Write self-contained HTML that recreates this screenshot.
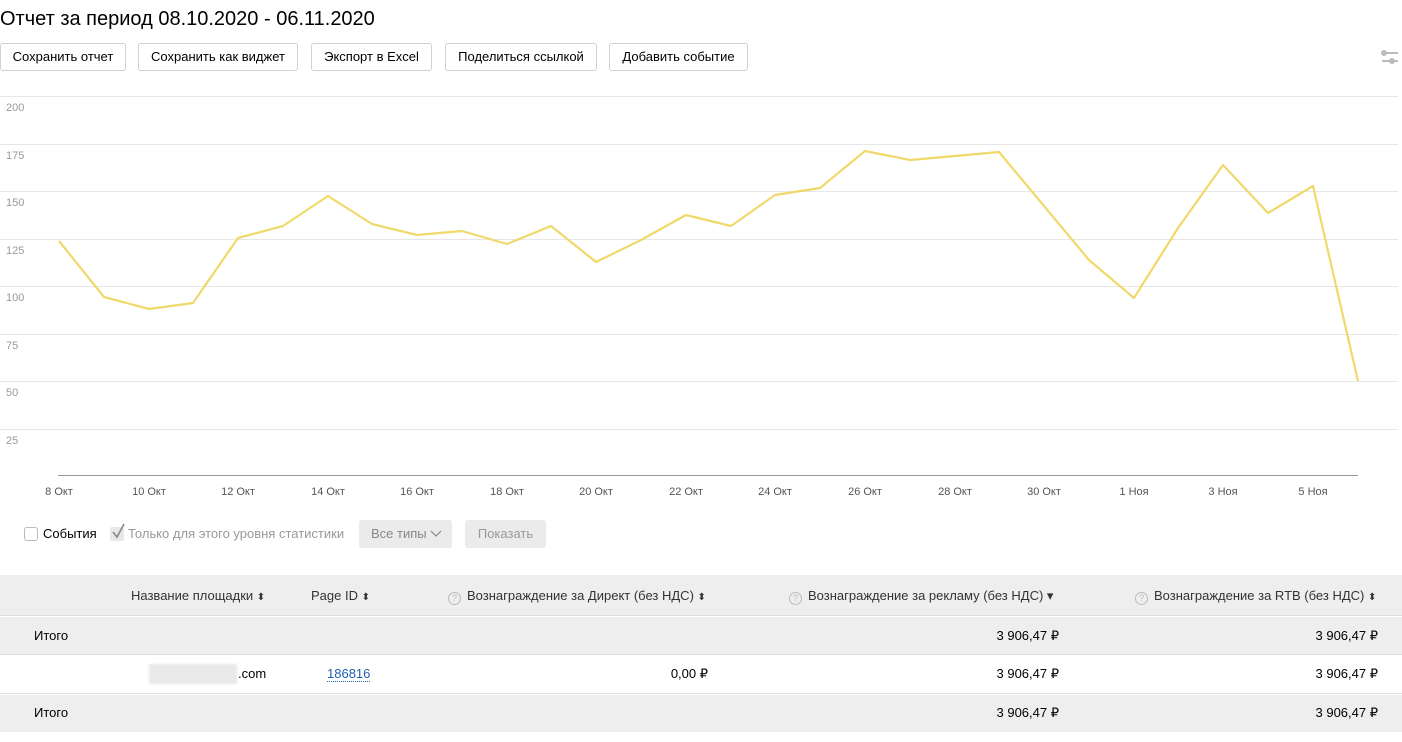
<!DOCTYPE html>
<html><head><meta charset="utf-8"><style>
*{margin:0;padding:0;box-sizing:border-box}
body{width:1402px;height:742px;background:#fff;font-family:"Liberation Sans",Arial,sans-serif;color:#000;position:relative;overflow:hidden}
.a{position:absolute;white-space:nowrap}
.btn{position:absolute;top:43px;height:28px;border:1px solid #d0d0d0;border-radius:3px;font-size:13px;line-height:26px;text-align:center;background:#fff}
.yl{position:absolute;left:6px;font-size:11px;color:#999}
.xl{position:absolute;top:486px;font-size:11px;color:#555;transform:translateX(-50%)}
.row{position:absolute;left:0;width:1402px}
.t{position:absolute;font-size:13px;line-height:16px}
.q{display:inline-block;width:13px;height:13px;border:1px solid #bbb;border-radius:50%;font-size:9px;line-height:11px;text-align:center;color:#bbb;margin-right:6px;vertical-align:-1px}
.s{font-size:10px}
</style></head><body>
<div class="a" style="left:0;top:8px;font-size:20px">Отчет за период 08.10.2020 - 06.11.2020</div>
<div class="btn" style="left:0;width:126px">Сохранить отчет</div>
<div class="btn" style="left:138px;width:160px">Сохранить как виджет</div>
<div class="btn" style="left:311px;width:121px">Экспорт в Excel</div>
<div class="btn" style="left:445px;width:152px">Поделиться ссылкой</div>
<div class="btn" style="left:609px;width:139px">Добавить событие</div>
<svg class="a" style="left:1380px;top:48px" width="20" height="18"><g fill="#bbb" stroke="#bbb" stroke-width="2"><line x1="2" y1="5" x2="18" y2="5"/><circle cx="4" cy="5" r="2"/><line x1="2" y1="13" x2="18" y2="13"/><circle cx="12" cy="13" r="2"/></g></svg>
<svg class="a" style="left:0;top:0" width="1402" height="500">
<g stroke="#e6e6e6" stroke-width="1">
<line x1="0" y1="96.5" x2="1398" y2="96.5"/><line x1="0" y1="144.5" x2="1398" y2="144.5"/><line x1="0" y1="191.5" x2="1398" y2="191.5"/><line x1="0" y1="239.5" x2="1398" y2="239.5"/><line x1="0" y1="286.5" x2="1398" y2="286.5"/><line x1="0" y1="334.5" x2="1398" y2="334.5"/><line x1="0" y1="381.5" x2="1398" y2="381.5"/><line x1="0" y1="429.5" x2="1398" y2="429.5"/>
</g>
<line x1="58" y1="475.5" x2="1358" y2="475.5" stroke="#999" stroke-width="1"/>
<polyline fill="none" stroke="#f0d96a" stroke-width="2.2" stroke-linejoin="round" points="59,241 104,297 149,309 193,303 238,238 283,226 328,196 372,224 417,235 462,231 507,244 551,226 596,262 641,240 686,215 731,226 775,195 820,188 865,151 910,160 955,156 999,152 1044,206 1089,260 1134,298 1178,228 1223,165 1268,213 1313,186 1358,381"/>
</svg>
<div class="yl" style="top:102px">200</div><div class="yl" style="top:150px">175</div><div class="yl" style="top:197px">150</div><div class="yl" style="top:245px">125</div><div class="yl" style="top:292px">100</div><div class="yl" style="top:340px">75</div><div class="yl" style="top:387px">50</div><div class="yl" style="top:435px">25</div>
<div class="xl" style="left:59px">8 Окт</div><div class="xl" style="left:149px">10 Окт</div><div class="xl" style="left:238px">12 Окт</div><div class="xl" style="left:328px">14 Окт</div><div class="xl" style="left:417px">16 Окт</div><div class="xl" style="left:507px">18 Окт</div><div class="xl" style="left:596px">20 Окт</div><div class="xl" style="left:686px">22 Окт</div><div class="xl" style="left:775px">24 Окт</div><div class="xl" style="left:865px">26 Окт</div><div class="xl" style="left:955px">28 Окт</div><div class="xl" style="left:1044px">30 Окт</div><div class="xl" style="left:1134px">1 Ноя</div><div class="xl" style="left:1223px">3 Ноя</div><div class="xl" style="left:1313px">5 Ноя</div>
<div class="a" style="left:24px;top:527px;width:14px;height:14px;border:1px solid #bbb;border-radius:3px"></div>
<div class="a" style="left:43px;top:526px;font-size:13px">События</div>
<div class="a" style="left:110px;top:527px;width:14px;height:14px;background:#e8e8e8;border-radius:2px"></div>
<svg class="a" style="left:110px;top:522px" width="16" height="18"><path d="M3 10 L7 15 L14 2" fill="none" stroke="#888" stroke-width="1.6"/></svg>
<div class="a" style="left:128px;top:526px;font-size:13px;color:#999">Только для этого уровня статистики</div>
<div class="a" style="left:359px;top:520px;width:93px;height:28px;background:#ebebeb;border-radius:3px;font-size:13px;color:#888;line-height:28px;padding-left:12px">Все типы</div>
<svg class="a" style="left:430px;top:530px" width="12" height="8"><path d="M1 1 L6 6 L11 1" fill="none" stroke="#888" stroke-width="1.2"/></svg>
<div class="a" style="left:465px;top:520px;width:81px;height:28px;background:#ebebeb;border-radius:3px;font-size:13px;color:#999;line-height:28px;text-align:center">Показать</div>
<div class="row" style="top:575px;height:41px;background:#eee;border-bottom:1px solid #ddd"></div>
<div class="row" style="top:617px;height:38px;background:#eee;border-bottom:1px solid #ddd"></div>
<div class="row" style="top:656px;height:38px;background:#fff;border-bottom:1px solid #ddd"></div>
<div class="row" style="top:695px;height:37px;background:#eee"></div>
<div class="t" style="left:131px;top:588px;color:#333">Название площадки <span class="s">⬍</span></div>
<div class="t" style="left:311px;top:588px;color:#333">Page ID <span class="s">⬍</span></div>
<div class="t" style="left:448px;top:588px;color:#333"><span class="q">?</span>Вознаграждение за Директ (без НДС) <span class="s">⬍</span></div>
<div class="t" style="left:789px;top:588px;color:#333"><span class="q">?</span>Вознаграждение за рекламу (без НДС) ▾</div>
<div class="t" style="left:1135px;top:588px;color:#333"><span class="q">?</span>Вознаграждение за RTB (без НДС) <span class="s">⬍</span></div>
<div class="t" style="left:34px;top:628px">Итого</div>
<div class="t" style="right:343px;top:628px">3 906,47 ₽</div>
<div class="t" style="right:24px;top:628px">3 906,47 ₽</div>
<div class="a" style="left:149px;top:664px;width:88px;height:20px;background:#e9e9e9;filter:blur(1px)"></div>
<div class="t" style="left:238px;top:666px">.com</div>
<div class="t" style="left:327px;top:666px;color:#2060b0;border-bottom:1px dotted #2060b0;line-height:15px">186816</div>
<div class="t" style="right:694px;top:666px">0,00 ₽</div>
<div class="t" style="right:343px;top:666px">3 906,47 ₽</div>
<div class="t" style="right:24px;top:666px">3 906,47 ₽</div>
<div class="t" style="left:34px;top:705px">Итого</div>
<div class="t" style="right:343px;top:705px">3 906,47 ₽</div>
<div class="t" style="right:24px;top:705px">3 906,47 ₽</div>
</body></html>
